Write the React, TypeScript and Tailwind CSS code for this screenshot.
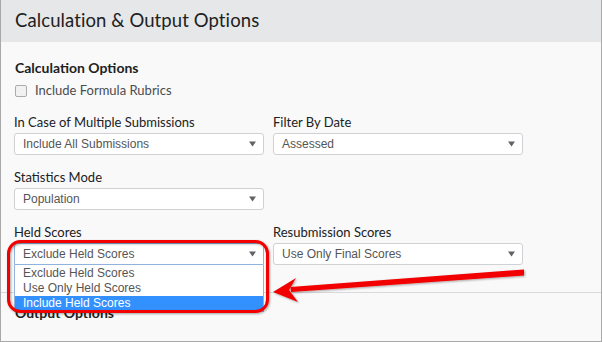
import React from 'react';

const Caret = () => (
  <svg width="7" height="6" viewBox="0 0 7 6" className="shrink-0">
    <path d="M0 0.5h7L3.5 5.5z" fill="#5f6266" />
  </svg>
);

interface SelectBoxProps {
  value: string;
  focused?: boolean;
  children?: React.ReactNode;
}

const SelectBox: React.FC<SelectBoxProps> = ({ value, focused, children }) => (
  <div className="relative">
    <div
      className={`flex items-center justify-between h-[22px] pl-[8px] pr-[7px] bg-white rounded-[3px] border ${
        focused ? 'border-[#8fb3dd] rounded-b-none' : 'border-[#cfd1d4]'
      }`}
    >
      <span className="text-[12px] text-[#555] font-['Liberation_Sans',Arial,sans-serif] leading-none">{value}</span>
      <Caret />
    </div>
    {children}
  </div>
);

const Field: React.FC<{ label: string; value: string; focused?: boolean; children?: React.ReactNode }> = ({
  label,
  value,
  focused,
  children,
}) => (
  <div className="flex flex-col">
    <label className="text-[13px] leading-[17px] text-[#202122] mb-[2px]">{label}</label>
    <SelectBox value={value} focused={focused}>
      {children}
    </SelectBox>
  </div>
);

const heldOptions = ['Exclude Held Scores', 'Use Only Held Scores', 'Include Held Scores'];

export default function App() {
  return (
    <div className="relative w-[602px] h-[342px] overflow-hidden bg-[#f9f9f9] border-x border-b border-[#a9a9a9] font-['Lato','Noto_Sans',sans-serif]">
      <div className="h-[42px] bg-[#e6e7e8] flex items-center px-[14px]">
        <h1 className="text-[18.5px] text-[#202122] tracking-[0.1px]">Calculation &amp; Output Options</h1>
      </div>

      <div className="px-[13px] pt-[17px] pb-[27px] border-b border-[#d8d9da]">
        <h2 className="text-[14px] leading-[18px] font-bold text-[#202122] ml-[1px]">Calculation Options</h2>
        <div className="flex items-center h-[18px] mt-[5px] ml-[1px]">
          <span className="w-[12px] h-[12px] rounded-[2px] border border-[#a9acaf] bg-[#f1f1f1]" />
          <span className="ml-[8px] text-[13px] text-[#494c4e]">Include Formula Rubrics</span>
        </div>

        <div className="grid grid-cols-[250px_250px] gap-x-[9px] gap-y-[14px] mt-[14px]">
          <Field label="In Case of Multiple Submissions" value="Include All Submissions" />
          <Field label="Filter By Date" value="Assessed" />
          <Field label="Statistics Mode" value="Population" />
          <div />
          <Field label="Held Scores" value="Exclude Held Scores" focused>
            <ul className="absolute left-0 top-full w-full bg-white border border-t-0 border-[#8fb3dd] z-10 pt-[1px] font-['Liberation_Sans',Arial,sans-serif] text-[12px]">
              {heldOptions.map((opt, i) => (
                <li
                  key={opt}
                  className={`h-[15px] leading-[15px] pl-[8px] ${
                    i === 2 ? 'bg-[#3391ff] text-white' : 'text-[#555]'
                  }`}
                >
                  {opt}
                </li>
              ))}
            </ul>
          </Field>
          <Field label="Resubmission Scores" value="Use Only Final Scores" />
        </div>
      </div>

      <div className="px-[14px] pt-[11px]">
        <h2 className="text-[14px] leading-[18px] font-bold text-[#202122]">Output Options</h2>
      </div>

      <svg className="absolute inset-0 pointer-events-none z-20" width="602" height="342" viewBox="0 0 602 342">
        <defs>
          <filter id="sh" x="-10%" y="-10%" width="120%" height="120%">
            <feDropShadow dx="1" dy="1" stdDeviation="1" floodColor="#000" floodOpacity="0.35" />
          </filter>
        </defs>
        <rect x="7.5" y="241.5" width="259" height="70" rx="12" ry="12" fill="none" stroke="#f20000" strokeWidth="3" filter="url(#sh)" />
        <g filter="url(#sh)" fill="#f20000">
          <polygon points="523,269.5 523,275.5 290,292 289.5,287" />
          <polygon points="272,292 295,278 288,290 297,302" />
        </g>
      </svg>
    </div>
  );
}
